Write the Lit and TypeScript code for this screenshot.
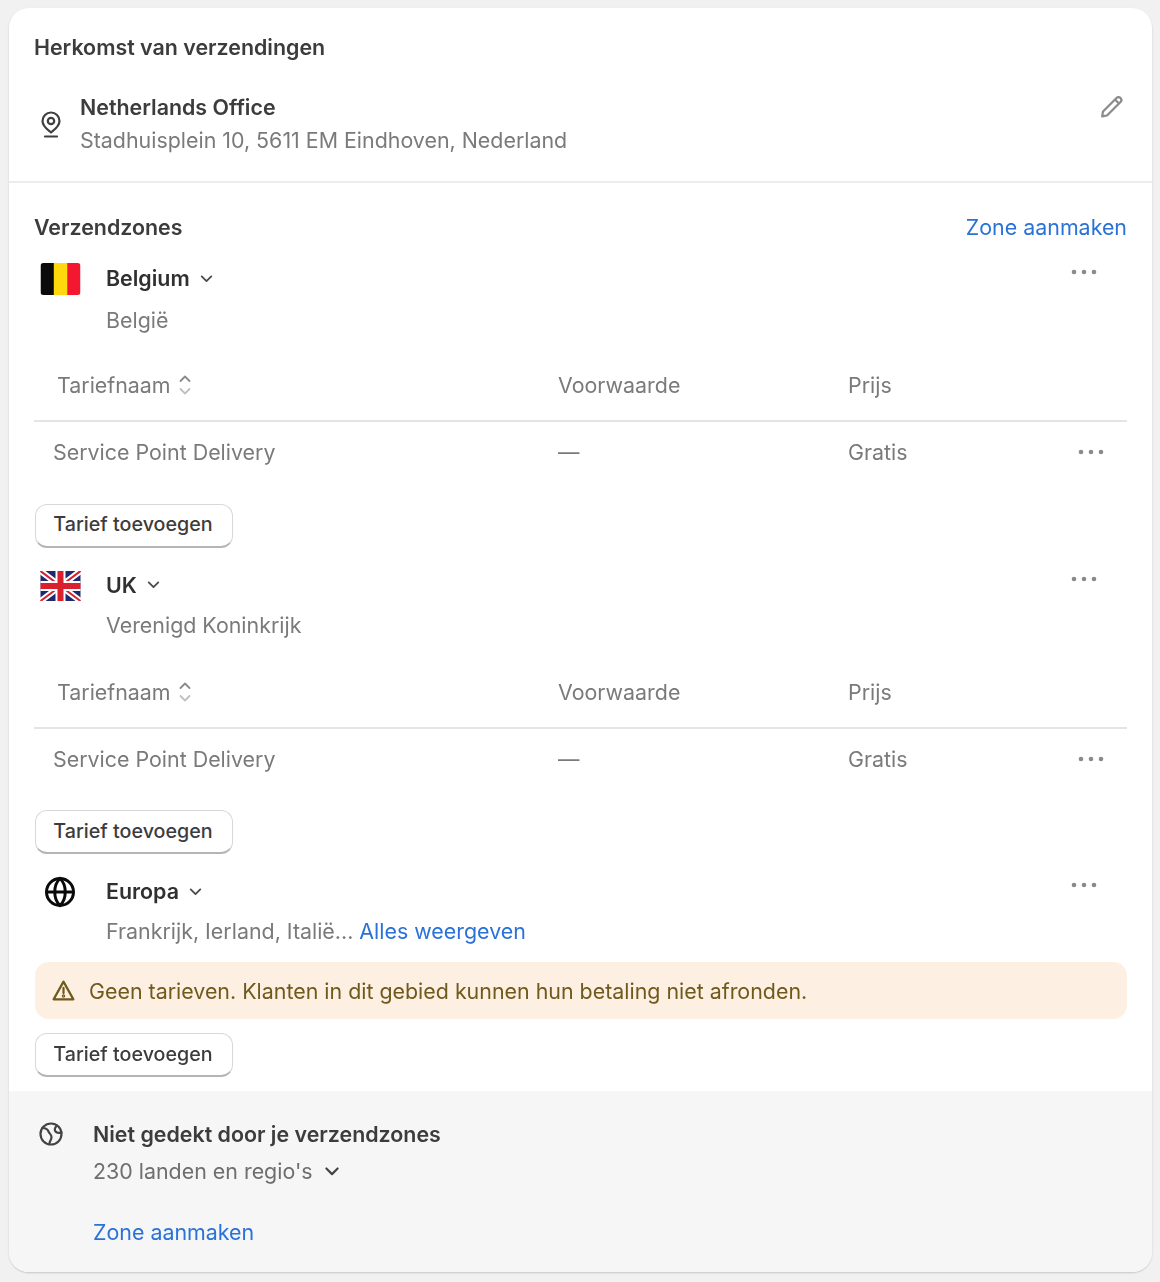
import { LitElement, html, css } from "lit";
import { customElement } from "lit/decorators.js";

const chevron = html`<svg class="chev" viewBox="0 0 16 16" fill="none" stroke="currentColor" stroke-width="1.7" stroke-linecap="round" stroke-linejoin="round"><path d="M3.5 6l4.5 4.5L12.5 6"/></svg>`;
const dots = html`<svg class="dots" viewBox="0 0 26 6" fill="currentColor"><circle cx="3" cy="3" r="2.3"/><circle cx="13" cy="3" r="2.3"/><circle cx="23" cy="3" r="2.3"/></svg>`;

const belgium = html`<svg class="flag" viewBox="0 0 40 32"><defs><clipPath id="b"><rect width="40" height="32" rx="3"/></clipPath></defs><g clip-path="url(#b)"><rect width="13.4" height="32" fill="#0b0b0b"/><rect x="13.4" width="13.3" height="32" fill="#ffd90c"/><rect x="26.7" width="13.3" height="32" fill="#f31830"/></g></svg>`;
const uk = html`<svg class="flag uk" viewBox="0 0 40 30"><rect width="40" height="30" fill="#1f2a6e"/><path d="M0 0L40 30M40 0L0 30" stroke="#fff" stroke-width="6"/><path d="M0 0L40 30M40 0L0 30" stroke="#d8202f" stroke-width="2"/><path d="M20 0V30M0 15H40" stroke="#fff" stroke-width="10"/><path d="M20 0V30M0 15H40" stroke="#d8202f" stroke-width="6"/></svg>`;
const globe = html`<svg class="flag globe" viewBox="0 0 32 32" fill="none" stroke="#0a0a0a" stroke-width="3"><circle cx="16" cy="16" r="13.5"/><path d="M2.5 16H29.5"/><path d="M16 2.5C9 9 9 23 16 29.5C23 23 23 9 16 2.5Z"/></svg>`;

@customElement("app-root")
class AppRoot extends LitElement {
  static styles = css`
    :host { display: block; font-family: Inter, "Liberation Sans", sans-serif; background: #f1f1f1; height: 1282px; box-sizing: border-box; padding: 8px 8px 0 9px; font-size: 21.4px; }
    .card { background: #fff; border-radius: 20px; overflow: hidden; height: 1264px; box-shadow: 0 1px 2px rgba(0,0,0,.18); display: flex; flex-direction: column; filter: blur(0.7px); }
    .origin { padding: 24px 25px 0; height: 175px; box-sizing: border-box; border-bottom: 2px solid #ececec; }
    .h { line-height: 30px; font-weight: 600; color: #3c3c3c; }
    .office { display: grid; grid-template-columns: 46px 1fr auto; margin-top: 29px; align-items: center; }
    .pin { width: 34px; height: 34px; margin-top: -2px; color: #3f3f3f; }
    .o1 { line-height: 33px; font-weight: 600; color: #3c3c3c; }
    .o2 { line-height: 33px; color: #7a7a7a; }
    .pencil { width: 26px; height: 26px; color: #8a8a8a; align-self: start; margin-right: 2px; margin-top: 2px; }
    .zones { padding: 29px 25px 0; flex: 1; }
    .zhead { display: flex; justify-content: space-between; align-items: center; height: 30px; }
    a { color: #2a72d8; text-decoration: none; }
    .head { display: grid; grid-template-columns: 72px 1fr auto; align-items: start; }
    .first { margin-top: 20px; }
    .next { margin-top: 21px; }
    .flagcell { display: flex; justify-content: center; align-items: center; width: 52px; height: 32px; margin-top: 1px; }
    .flag { width: 41px; height: 32px; display: block; }
    .uk { height: 30px; }
    .globe { width: 32px; height: 32px; }
    .title { display: flex; align-items: center; gap: 8px; font-weight: 600; color: #303030; line-height: 32px; }
    .chev { width: 17px; height: 17px; color: #4a4a4a; }
    .dots { width: 26px; height: 6px; color: #8a8a8a; display: block; }
    .head > .dots { margin: 7px 30px 0 0; }
    .sub { grid-column: 2 / 4; line-height: 32px; color: #7a7a7a; margin-top: 9px; }
    .next .sub { margin: 7px 0 2px; }
    .table { margin-top: 34px; }
    .tr { display: grid; align-items: center; color: #7a7a7a; }
    .th { height: 53px; border-bottom: 2px solid #e4e4e4; padding-left: 23px; grid-template-columns: 501px 290px 1fr; align-items: start; line-height: 32px; box-sizing: border-box; margin-top: -1px; }
    .sort { display: inline-flex; align-items: center; gap: 6px; }
    .sort svg { width: 16px; height: 24px; color: #8a8a8a; }
    .td { height: 60.5px; padding-left: 19px; grid-template-columns: 505px 290px 1fr auto; }
    .td .dots { margin-right: 23px; }
    .btnrow { display: flex; margin-top: 21px; padding-left: 1px; }
    .btn { display: inline-flex; align-items: center; justify-content: center; box-sizing: border-box; width: 198px; height: 44px; border-radius: 12px; background: #fff; border: 1px solid #d8d8d8; border-bottom: 2px solid #b5b5b5; font-size: 19.7px; font-weight: 500; color: #3c3c3c; font-family: inherit; padding: 0 2px 2px 0; }
    .banner { display: flex; align-items: center; gap: 13px; height: 57px; border-radius: 14px; background: #fdf0e2; margin: 13px 0 0 1px; padding-left: 16px; color: #6f5a1c; }
    .banner svg { width: 25px; height: 25px; color: #6f5a1c; }
    .short { margin-top: 14px; }
    .footer { background: #f6f6f6; height: 181px; box-sizing: border-box; padding: 27px 0 0 28px; display: grid; grid-template-columns: 56px 1fr; align-content: start; }
    .fi { width: 28px; height: 28px; color: #444; margin-top: 2px; }
    .f1 { font-weight: 600; line-height: 32px; color: #3c3c3c; }
    .f2 { line-height: 32px; color: #6e6e6e; margin-top: 5px; display: flex; align-items: center; gap: 9px; }
    .f2 svg { width: 20px; height: 20px; color: #444; }
    .f3 { margin-top: 29px; line-height: 32px; display: block; }
  `;
  table() {
    return html`<div class="table">
      <div class="tr th"><span class="sort">Tariefnaam
        <svg viewBox="0 0 16 24" fill="none" stroke="currentColor" stroke-width="1.8" stroke-linecap="round" stroke-linejoin="round"><path d="M3.5 8L8 3.5 12.5 8"/><path d="M3.5 16L8 20.5 12.5 16" stroke="#c0c0c0"/></svg></span><span>Voorwaarde</span><span>Prijs</span></div>
      <div class="tr td"><span>Service Point Delivery</span><span>—</span><span>Gratis</span>${dots}</div>
    </div>`;
  }
  zone(cls: string, flag: unknown, name: string, sub: unknown) {
    return html`<div class="head ${cls}">
      <div class="flagcell">${flag}</div>
      <div class="title">${name}${chevron}</div>
      ${dots}
      <div class="sub">${sub}</div>
    </div>`;
  }
  button(cls = "") {
    return html`<div class="btnrow ${cls}"><button class="btn">Tarief toevoegen</button></div>`;
  }
  render() {
    return html`<div class="card">
      <section class="origin">
        <div class="h">Herkomst van verzendingen</div>
        <div class="office">
          <svg class="pin" viewBox="0 0 34 34" fill="none" stroke="currentColor" stroke-width="2.2" stroke-linecap="round" stroke-linejoin="round"><path d="M17 26.5c-3-2.5-8.5-6-8.5-11.5a8.5 8.5 0 0 1 17 0c0 5.5-5.5 9-8.5 11.5Z"/><circle cx="17" cy="15" r="3.2"/><path d="M11 30.5h12"/></svg>
          <div><div class="o1">Netherlands Office</div><div class="o2">Stadhuisplein 10, 5611 EM Eindhoven, Nederland</div></div>
          <svg class="pencil" viewBox="0 0 26 26" fill="none" stroke="currentColor" stroke-width="2.2" stroke-linejoin="round"><path d="M4 18.5 17.5 5a2.8 2.8 0 0 1 4 4L8 22.5l-4.8.8Z"/><path d="M16 6.5l3.5 3.5"/></svg>
        </div>
      </section>
      <section class="zones">
        <div class="zhead"><span class="h">Verzendzones</span><a>Zone aanmaken</a></div>
        ${this.zone("first", belgium, "Belgium", "België")}
        ${this.table()}
        ${this.button()}
        ${this.zone("next", uk, "UK", "Verenigd Koninkrijk")}
        ${this.table()}
        ${this.button()}
        ${this.zone("next", globe, "Europa", html`Frankrijk, Ierland, Italië... <a>Alles weergeven</a>`)}
        <div class="banner">
          <svg viewBox="0 0 24 24" fill="none" stroke="currentColor" stroke-width="2.1" stroke-linecap="round" stroke-linejoin="round"><path d="M12 3.5 2.5 20.5h19Z"/><path d="M12 9.5v5"/><circle cx="12" cy="17.3" r=".6"/></svg>
          Geen tarieven. Klanten in dit gebied kunnen hun betaling niet afronden.
        </div>
        ${this.button("short")}
      </section>
      <section class="footer">
        <svg class="fi" viewBox="0 0 28 28" fill="none" stroke="currentColor" stroke-width="2.2" stroke-linejoin="round" stroke-linecap="round"><circle cx="14" cy="14" r="10.5"/><path d="M5.5 8c3 0 5 1 6 3.5s3 3 3 5.500-1.500 4-2 6"/><path d="M20 5.500c-2 2-3 4-1.500 6s3.500 1.500 6 1"/></svg>
        <div>
          <div class="f1">Niet gedekt door je verzendzones</div>
          <div class="f2">230 landen en regio's <svg viewBox="0 0 16 16" fill="none" stroke="currentColor" stroke-width="1.7" stroke-linecap="round" stroke-linejoin="round"><path d="M3.5 6l4.5 4.5L12.5 6"/></svg></div>
          <a class="f3">Zone aanmaken</a>
        </div>
      </section>
    </div>`;
  }
}
